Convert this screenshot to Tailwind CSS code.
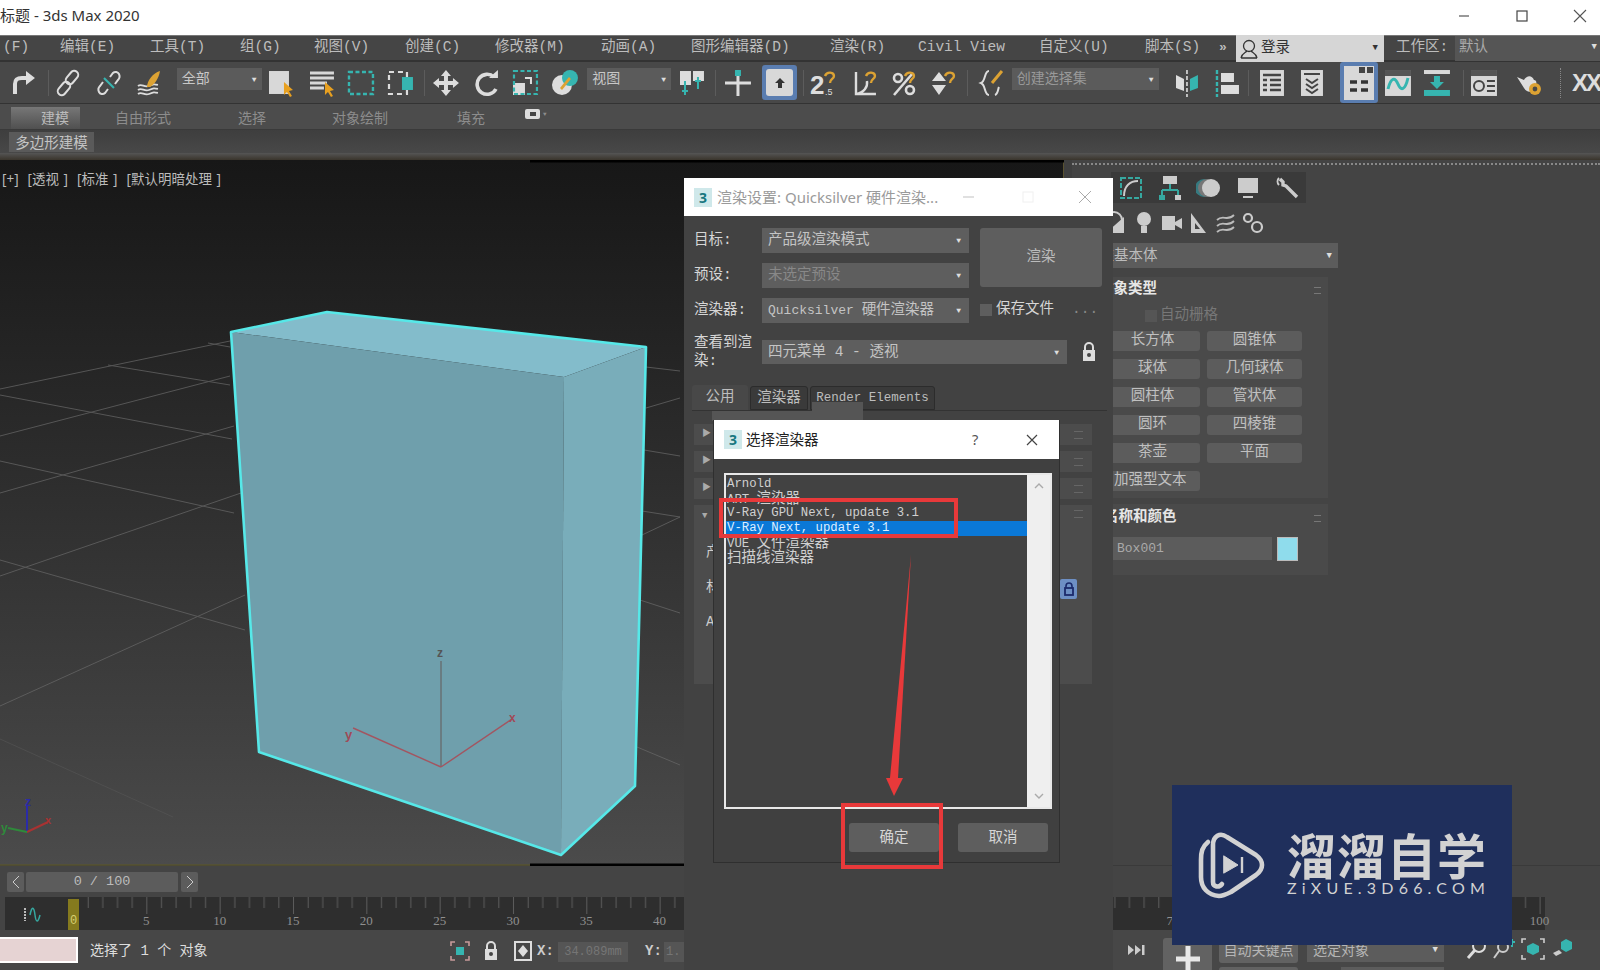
<!DOCTYPE html>
<html lang="zh-CN">
<head>
<meta charset="UTF-8" />
<title>3ds Max 2020</title>
<script src="https://cdn.jsdelivr.net/npm/@tailwindcss/browser@4"></script>
</head>
<body class="bg-[#444]">
<div class="relative w-[1600px] h-[970px] overflow-hidden flex flex-col bg-[#444] text-[#c8c8c8] [font-family:'Liberation_Mono','Noto_Sans_CJK_SC',monospace]">

  <!-- title bar -->
  <div class="h-[35px] shrink-0 bg-white flex items-center justify-between pb-[4px] text-[#333] text-[15px] [font-family:'Noto_Sans','Noto_Sans_CJK_SC',sans-serif]">
    <span>标题 - 3ds Max 2020</span>
    <div class="flex items-center gap-[30px] pr-[6px]">
      <svg class="w-[28px] h-[14px]" viewBox="0 0 28 14"><path d="M9 7h10" stroke="#555" stroke-width="1.2"/></svg>
      <svg class="w-[28px] h-[14px]" viewBox="0 0 28 14"><rect x="9" y="2" width="10" height="10" fill="none" stroke="#444" stroke-width="1.2"/></svg>
      <svg class="w-[28px] h-[14px]" viewBox="0 0 28 14"><path d="M8 1l12 12M20 1L8 13" stroke="#555" stroke-width="1.1"/></svg>
    </div>
  </div>

  <!-- menu bar -->
  <div class="h-[27px] shrink-0 flex items-center bg-[#454545] border-t border-[#777] border-b-2 border-b-[#333] text-[14.5px] text-[#bdbdbd] pl-[3px]">
    <span class="w-[57px]">(F)</span>
    <span class="w-[90px]">编辑(E)</span>
    <span class="w-[90px]">工具(T)</span>
    <span class="w-[74px]">组(G)</span>
    <span class="w-[91px]">视图(V)</span>
    <span class="w-[90px]">创建(C)</span>
    <span class="w-[106px]">修改器(M)</span>
    <span class="w-[90px]">动画(A)</span>
    <span class="w-[139px]">图形编辑器(D)</span>
    <span class="w-[88px]">渲染(R)</span>
    <span class="w-[121px]">Civil View</span>
    <span class="w-[106px]">自定义(U)</span>
    <span class="w-[74px]">脚本(S)</span>
    <span class="w-[17px] text-[13px] font-bold">»</span>
    <div class="w-[148px] h-[27px] bg-[#d6d6d6] text-[#333] flex items-center justify-between pr-[6px] pt-[2px]">
      <span class="flex items-center gap-[2px]">
        <svg class="ml-[3px] w-[20px] h-[22px]" viewBox="0 0 20 22" fill="none" stroke="#333" stroke-width="1.3"><circle cx="10" cy="8" r="5.5"/><path d="M2 20c1-5 4-5 6-7M18 20c-1-5-4-5-6-7M2 20h16"/></svg>
        登录
      </span>
      <span class="text-[9px]">▼</span>
    </div>
    <span class="ml-[12px] w-[59px]">工作区:</span>
    <div class="w-[145px] h-[25px] bg-[#555] text-[#aaa] flex items-center justify-between pl-[4px] pr-[3px]">
      <span>默认</span><span class="text-[9px] text-[#ddd]">▼</span>
    </div>
  </div>

  <!-- main toolbar -->
  <div class="h-[42px] shrink-0 flex items-center bg-[#484848] border-b border-[#333] text-[14px]">
    <svg class="ml-[8px] w-[28px] h-[28px]" viewBox="0 0 28 28"><path d="M7 25V15c0-5 3-6 7-6h5" fill="none" stroke="#ddd" stroke-width="4"/><path d="M18 2l9 7-9 7z" fill="#ddd"/></svg>
    <div class="ml-[12px] w-px h-[26px] bg-[#5c5c5c]"></div>
    <svg class="ml-[5px] w-[28px] h-[28px]" viewBox="0 0 28 28" fill="none" stroke="#ddd" stroke-width="2"><rect x="14" y="1" width="8" height="15" rx="4" transform="rotate(40 18 8.500)"/><rect x="6" y="12" width="8" height="15" rx="4" transform="rotate(40 10 19.500)"/></svg>
    <svg class="ml-[13px] w-[28px] h-[28px]" viewBox="0 0 28 28" fill="none" stroke="#ddd" stroke-width="2"><path d="M15 8l3-4c2-2 5-1 6 1s1 4-1 6l-3 4M13 20l-3 4c-2 2-5 1-6-1s-1-4 1-6l3-4"/><path d="M9 9l10 10" stroke="#36b5b0"/></svg>
    <svg class="ml-[13px] w-[28px] h-[28px]" viewBox="0 0 28 28" fill="none"><path d="M2 17c4-3 6 2 11 0s5-2 9-1M2 21c4-3 6 2 11 0s5-2 9-1M2 25c4-3 6 2 11 0s5-2 9-1" stroke="#ddd" stroke-width="1.8"/><path d="M11 18c0-6 6-14 13-16-1 7-5 13-10 16z" fill="#dca233"/></svg>
    <div class="ml-[13px] mb-[8px] w-[85px] h-[22px] bg-[#5b5b5b] flex items-center justify-between px-[5px] pt-[2px]"><span>全部</span><span class="text-[8px] text-[#ddd]">▼</span></div>
    <svg class="ml-[5px] w-[28px] h-[28px]" viewBox="0 0 28 28"><rect x="2" y="2" width="20" height="23" fill="#d8d8d8"/><path d="M17 13l9 8-4 1 3 5-2 1-3-5-3 3z" fill="#e8a020"/></svg>
    <svg class="ml-[13px] w-[28px] h-[28px]" viewBox="0 0 28 28"><path d="M2 4h24M2 9h24M2 14h17M2 19h14" stroke="#d8d8d8" stroke-width="3"/><path d="M17 13l9 8-4 1 3 5-2 1-3-5-3 3z" fill="#e8a020"/></svg>
    <svg class="ml-[11px] w-[28px] h-[28px]" viewBox="0 0 28 28"><rect x="2" y="3" width="24" height="22" fill="none" stroke="#36b5b0" stroke-width="2.4" stroke-dasharray="4 2.5"/></svg>
    <svg class="ml-[12px] w-[28px] h-[28px]" viewBox="0 0 28 28"><rect x="2" y="3" width="18" height="22" fill="none" stroke="#ddd" stroke-width="2.2" stroke-dasharray="5 4"/><rect x="15" y="8" width="11" height="13" fill="#36b5b0"/></svg>
    <div class="ml-[10px] w-px h-[26px] bg-[#5c5c5c]"></div>
    <svg class="ml-[7px] w-[28px] h-[28px]" viewBox="0 0 28 28" fill="#ddd"><path d="M14 1l5 6h-3v5h5V9l6 5-6 5v-3h-5v5h3l-5 6-5-6h3v-5H7v3l-6-5 6-5v3h5V7H9z"/></svg>
    <svg class="ml-[13px] w-[28px] h-[28px]" viewBox="0 0 28 28" fill="none"><path d="M21 8a10 10 0 1 0 2 12" stroke="#ddd" stroke-width="3.6"/><path d="M16 9h9V1z" fill="#ddd"/></svg>
    <svg class="ml-[10px] w-[28px] h-[28px]" viewBox="0 0 28 28"><rect x="2" y="14" width="12" height="12" fill="#ddd"/><rect x="3" y="2" width="23" height="23" fill="none" stroke="#36b5b0" stroke-width="2.2" stroke-dasharray="4 2.5"/><path d="M14 9h6v6" fill="none" stroke="#ddd" stroke-width="2"/></svg>
    <svg class="ml-[12px] w-[28px] h-[28px]" viewBox="0 0 28 28"><circle cx="11" cy="16" r="10" fill="#ddd"/><circle cx="19" cy="9" r="8" fill="#36b5b0"/><path d="M9 19l9-11 2 2-9 11z" fill="#dca233"/></svg>
    <div class="ml-[8px] mb-[8px] w-[84px] h-[22px] bg-[#5b5b5b] flex items-center justify-between px-[5px] pt-[2px]"><span>视图</span><span class="text-[8px] text-[#ddd]">▼</span></div>
    <svg class="ml-[7px] w-[28px] h-[28px]" viewBox="0 0 28 28"><rect x="2" y="2" width="11" height="14" fill="#ddd"/><rect x="15" y="2" width="11" height="10" fill="#ddd"/><path d="M7 12v14M4 22h6M20 8v12M17 12h6" stroke="#36b5b0" stroke-width="2"/></svg>
    <div class="ml-[9px] w-px h-[26px] bg-[#5c5c5c]"></div>
    <svg class="ml-[8px] w-[28px] h-[28px]" viewBox="0 0 28 28"><path d="M14 1v26M1 14h26" stroke="#ddd" stroke-width="3"/><rect x="11" y="1" width="6" height="6" fill="#36b5b0"/></svg>
    <div class="ml-[10px] w-[35px] h-[35px] rounded-[3px] bg-[#5a7db0] flex items-center justify-center">
      <div class="w-[27px] h-[27px] rounded-[3px] bg-[#d8d8d8] flex items-center justify-center">
        <svg class="w-[12px] h-[12px]" viewBox="0 0 12 12"><path d="M6 1l5 5H8v5H4V6H1z" fill="#333"/></svg>
      </div>
    </div>
    <div class="ml-[6px] w-px h-[26px] bg-[#5c5c5c]"></div>
    <svg class="ml-[6px] w-[28px] h-[30px]" viewBox="0 0 28 30"><text x="0" y="26" font-size="26" font-weight="700" fill="#ddd" font-family="Liberation Sans">2</text><text x="15" y="27" font-size="9" fill="#ddd" font-family="Liberation Sans">.5</text><path d="M15 8c2-5 9-4 9 0 0 3-4 3-4 7" fill="none" stroke="#dca233" stroke-width="2.4"/></svg>
    <svg class="ml-[14px] w-[28px] h-[28px]" viewBox="0 0 28 28"><path d="M4 3v22h20M4 25c8-1 12-7 11-13" fill="none" stroke="#ddd" stroke-width="2.4"/><path d="M14 7c2-5 9-4 9 0 0 3-4 3-4 7" fill="none" stroke="#dca233" stroke-width="2.4"/></svg>
    <svg class="ml-[10px] w-[28px] h-[28px]" viewBox="0 0 28 28" fill="none"><circle cx="8" cy="9" r="4" stroke="#ddd" stroke-width="2.6"/><circle cx="20" cy="21" r="4" stroke="#ddd" stroke-width="2.6"/><path d="M4 26L23 4" stroke="#ddd" stroke-width="2.6"/><path d="M15 7c2-5 9-4 9 0 0 3-4 3-4 7" stroke="#dca233" stroke-width="2.4"/></svg>
    <svg class="ml-[12px] w-[28px] h-[28px]" viewBox="0 0 28 28"><path d="M9 3l7 9H2zM9 26l7-10H2z" fill="#ddd"/><path d="M15 7c2-5 9-4 9 0 0 3-4 3-4 7" fill="none" stroke="#dca233" stroke-width="2.4"/></svg>
    <div class="ml-[9px] w-px h-[26px] bg-[#5c5c5c]"></div>
    <svg class="ml-[10px] w-[28px] h-[28px]" viewBox="0 0 28 28" fill="none"><path d="M11 2C6 2 8 12 3 14c5 2 3 12 8 12" stroke="#ddd" stroke-width="2"/><path d="M14 14L24 2" stroke="#dca233" stroke-width="3"/><path d="M17 26c3-1 3-6 4-8" stroke="#ddd" stroke-width="2"/></svg>
    <div class="ml-[6px] mb-[8px] w-[147px] h-[22px] bg-[#5b5b5b] flex items-center justify-between px-[5px] pt-[2px] text-[#999]"><span>创建选择集</span><span class="text-[8px] text-[#ddd]">▼</span></div>
    <svg class="ml-[14px] w-[28px] h-[28px]" viewBox="0 0 28 28"><path d="M3 6l8 4v12l-8-3z" fill="#ddd"/><path d="M25 6l-8 4v12l8-3z" fill="#36b5b0"/><path d="M14 1v27" stroke="#ddd" stroke-width="1.6" stroke-dasharray="4 2"/></svg>
    <svg class="ml-[13px] w-[28px] h-[28px]" viewBox="0 0 28 28"><path d="M4 1v27" stroke="#36b5b0" stroke-width="2.4" stroke-dasharray="4 2"/><rect x="8" y="4" width="13" height="9" fill="#ddd"/><rect x="8" y="16" width="18" height="9" fill="#ddd"/></svg>
    <div class="ml-[7px] w-px h-[26px] bg-[#5c5c5c]"></div>
    <svg class="ml-[9px] w-[28px] h-[28px]" viewBox="0 0 28 28"><rect x="2" y="1" width="24" height="26" fill="#d8d8d8"/><path d="M5 6h18M5 11h4M12 11h11M5 16h4M12 16h11M5 21h4M12 21h11" stroke="#444" stroke-width="2.4"/></svg>
    <svg class="ml-[12px] w-[28px] h-[28px]" viewBox="0 0 28 28"><rect x="3" y="1" width="22" height="26" fill="#d8d8d8"/><path d="M6 5h16M8 10l6 4 6-4M8 15l6 4 6-4M8 20l6 4 6-4" stroke="#444" stroke-width="2" fill="none"/></svg>
    <div class="ml-[14px] w-[38px] h-[41px] rounded-[3px] bg-[#5a7db0] flex items-center justify-center">
      <svg class="w-[30px] h-[34px]" viewBox="0 0 30 34"><rect width="30" height="34" fill="#d8d8d8"/><path d="M15 1h6v6h-6zM23 1h6v6h-6z" fill="#444"/><path d="M6 16h7M17 16h7M6 24h7M17 24h7" stroke="#333" stroke-width="3.5"/></svg>
    </div>
    <svg class="ml-[6px] w-[28px] h-[28px]" viewBox="0 0 28 28"><rect x="1" y="1" width="26" height="26" fill="#d8d8d8"/><rect x="1" y="1" width="26" height="6" fill="#555"/><path d="M4 20c3-12 7-12 10-5s7 7 10-6" fill="none" stroke="#36b5b0" stroke-width="3"/></svg>
    <svg class="ml-[11px] w-[28px] h-[28px]" viewBox="0 0 28 28"><rect x="1" y="1" width="26" height="4" fill="#d8d8d8"/><rect x="1" y="21" width="26" height="6" fill="#36b5b0"/><path d="M11 7h6v6h4l-7 7-7-7h4z" fill="#36b5b0"/></svg>
    <div class="ml-[12px] w-px h-[26px] bg-[#5c5c5c]"></div>
    <svg class="ml-[6px] w-[28px] h-[28px]" viewBox="0 0 28 28"><rect x="1" y="1" width="26" height="26" fill="#d8d8d8"/><rect x="1" y="1" width="26" height="6" fill="#555"/><circle cx="9" cy="17" r="5" fill="none" stroke="#444" stroke-width="2"/><path d="M17 12h8M17 17h8M17 22h8" stroke="#444" stroke-width="2"/></svg>
    <svg class="ml-[18px] w-[28px] h-[28px]" viewBox="0 0 28 28"><path d="M1 8l7 3c3-5 8-5 10 0 3 0 3 3 1 8-3 5-8 5-11 0z" fill="#ddd"/><circle cx="19" cy="20" r="6" fill="#dca233"/><circle cx="19" cy="20" r="2.4" fill="#484848"/></svg>
    <div class="ml-[16px] h-[30px] border-l border-dotted border-[#888]"></div>
    <span class="ml-[11px] text-[#ddd] text-[24px] font-bold tracking-[-2px] [font-family:'Liberation_Sans',sans-serif]">XX</span>
  </div>

  <!-- ribbon -->
  <div class="h-[26px] shrink-0 flex items-end bg-[#4c4c4c] border-b border-[#3a3a3a] text-[14px] leading-[24px] text-[#8c8c8c]">
    <div class="ml-[11px] w-[69px] h-[22px] bg-gradient-to-b from-[#777] to-[#505050] text-[#bbb] pl-[30px]">建模</div>
    <span class="ml-[35px] w-[60px] h-[22px]">自由形式</span>
    <span class="ml-[63px] w-[32px] h-[22px]">选择</span>
    <span class="ml-[62px] w-[60px] h-[22px]">对象绘制</span>
    <span class="ml-[65px] w-[30px] h-[22px]">填充</span>
    <div class="ml-[38px] h-[22px] flex items-start gap-[3px] pt-[2px]">
      <div class="w-[15px] h-[10px] rounded-[2px] bg-[#ddd] flex items-center justify-center"><div class="w-[6px] h-[4px] bg-[#444]"></div></div>
      <span class="text-[6px] leading-[12px]">▼</span>
    </div>
  </div>
  <div class="h-[23px] shrink-0 flex items-center bg-gradient-to-b from-[#3e3e3e] to-[#484848]">
    <div class="ml-[9px] w-[85px] h-[20px] bg-[#5a5a5a] text-[14.500px] leading-[19px] text-center text-[#c4c4c4] [font-family:'Noto_Sans_CJK_SC',sans-serif]">多边形建模</div>
  </div>
  <div class="h-[7px] shrink-0 bg-gradient-to-b from-[#555] to-[#3a352c]"></div>

  <!-- viewport and command panel -->
  <div class="h-[706px] shrink-0 flex border-b border-[#3a3a3a]">
    <div class="relative w-[1064px] shrink-0 bg-gradient-to-b from-[#171717] to-[#4b4b4b] border-r border-[#5a5230]">
      <svg class="absolute inset-0 w-[1064px] h-[706px]" viewBox="0 160 1064 706">
        <path d="M530 161H1064" stroke="#000" stroke-width="3"/>
        <path d="M530 865H684" stroke="#000" stroke-width="3"/>
        <path d="M0 865H530" stroke="#57532f" stroke-width="1.5"/>
        <g stroke="#6a6a6a" stroke-width="1" fill="none" opacity=".7">
          <path d="M0 389L230 341M0 436L230 376M0 493L234 426M0 576L241 493M0 706L245 595"/>
          <path d="M208 343L230 347M108 365L230 385M0 395L232 439M0 461L234 513M0 560L245 630"/>
          <path d="M646 367L680 371M646 408L680 398M644 450L680 456M642 511L680 517M642 535L680 517M640 600L680 613M637 747L680 765"/>
        </g>
        <path d="M0 739L173 817" stroke="#5a5a5a" stroke-width="1" opacity=".5"/>
        <path d="M231 332L327 312L646 347L564 377Z" fill="#83bccb"/>
        <path d="M231 332L564 377L561 855L259 752Z" fill="#6f9fac"/>
        <path d="M564 377L646 347L635 786L561 855Z" fill="#79adba"/>
        <path d="M231 332L327 312L646 347L635 786L561 855L259 752Z" fill="none" stroke="#56e8e8" stroke-width="2.6" stroke-linejoin="round"/>
        <path d="M441 767V661" stroke="#666" stroke-width="1.2"/>
        <path d="M441 767L349 739" stroke="#a35560" stroke-width="1.4" transform="rotate(7 441 767)"/>
        <path d="M441 767L512 719" stroke="#a35560" stroke-width="1.4"/>
        <text x="437" y="657" font-size="12" font-weight="700" fill="#555" font-family="Liberation Sans">z</text>
        <text x="345" y="739" font-size="13" font-weight="700" fill="#a04a58" font-family="Liberation Sans">y</text>
        <text x="509" y="722" font-size="12" font-weight="700" fill="#a04a58" font-family="Liberation Sans">x</text>
        <path d="M27 832V806" stroke="#2b2ba8" stroke-width="2"/>
        <path d="M27 832L48 822" stroke="#a83232" stroke-width="2"/>
        <path d="M27 832L8 828" stroke="#2f8a3b" stroke-width="2"/>
        <text x="25" y="806" font-size="12" font-weight="700" fill="#2b2ba8" font-family="Liberation Sans">z</text>
        <text x="45" y="824" font-size="11" font-weight="700" fill="#a83232" font-family="Liberation Sans">x</text>
        <text x="1" y="832" font-size="12" font-weight="700" fill="#2f8a3b" font-family="Liberation Sans">y</text>
      </svg>
      <div class="relative pl-[2px] pt-[9px] text-[13.5px] text-[#bbb] whitespace-pre [word-spacing:1px] [font-family:'Noto_Sans','Noto_Sans_CJK_SC',sans-serif]">[+]  [透视 ]  [标准 ]  [默认明暗处理 ]</div>
    </div>

    <div class="w-[8px] shrink-0 bg-[#3f3f3f]"></div>

    <!-- command panel -->
    <div class="flex-1 flex flex-col">
      <div class="mt-[3px] h-[2px] border-t-2 border-dotted border-[#888]"></div>
      <div class="mt-[7px] h-[31px] flex ml-[39px]">
        <div class="w-[39px] bg-[#3a3a3a] flex items-center justify-center"><svg class="w-[26px] h-[26px]" viewBox="0 0 26 26" fill="none" stroke="#36a8a0" stroke-width="2"><rect x="3" y="3" width="20" height="20" stroke-dasharray="5 2"/><path d="M6 21c0-10 6-15 14-15" stroke="#ccc"/></svg></div>
        <div class="w-[39px] bg-[#3a3a3a] flex items-center justify-center"><svg class="w-[26px] h-[26px]" viewBox="0 0 26 26"><rect x="6" y="1" width="14" height="8" fill="#ccc"/><path d="M13 9v6M5 15h16M5 15v5M21 15v5" stroke="#36a8a0" stroke-width="2" fill="none"/><rect x="2" y="20" width="6" height="5" fill="#36a8a0"/><rect x="18" y="20" width="6" height="5" fill="#ccc"/></svg></div>
        <div class="w-[39px] bg-[#3a3a3a] flex items-center justify-center"><svg class="w-[26px] h-[26px]" viewBox="0 0 26 26"><circle cx="8" cy="13" r="9" fill="#367a80"/><circle cx="11" cy="13" r="9" fill="#777"/><circle cx="15" cy="13" r="9" fill="#ccc"/></svg></div>
        <div class="w-[39px] bg-[#3a3a3a] flex items-center justify-center"><svg class="w-[26px] h-[26px]" viewBox="0 0 26 26"><rect x="3" y="3" width="20" height="15" fill="#ccc"/><path d="M8 22h10" stroke="#ccc" stroke-width="2"/></svg></div>
        <div class="w-[39px] bg-[#3a3a3a] flex items-center justify-center"><svg class="w-[26px] h-[26px]" viewBox="0 0 26 26" fill="none"><path d="M6 4l3 3v3l3 1 11 11" stroke="#ccc" stroke-width="3.4"/><path d="M5 3a5 5 0 0 0 0 7" stroke="#ccc" stroke-width="2"/></svg></div>
      </div>
      <div class="mt-[6px] h-[28px] flex items-center ml-[32px]">
        <svg class="w-[27px] h-[24px]" viewBox="0 0 27 24"><circle cx="10" cy="9" r="8" fill="none" stroke="#ccc" stroke-width="2"/><path d="M2 22L20 6v16z" fill="#ccc"/></svg>
        <svg class="w-[27px] h-[24px]" viewBox="0 0 27 24"><circle cx="13" cy="8" r="7" fill="#ccc"/><rect x="10" y="15" width="6" height="7" fill="#ccc"/></svg>
        <svg class="w-[27px] h-[24px]" viewBox="0 0 27 24"><rect x="4" y="5" width="13" height="14" fill="#ccc"/><path d="M17 11l7-4v11l-7-4z" fill="#ccc"/></svg>
        <svg class="w-[27px] h-[24px]" viewBox="0 0 27 24"><path d="M6 2l15 20H6zM10 12v6h5z" fill="#ccc" fill-rule="evenodd"/></svg>
        <svg class="w-[27px] h-[24px]" viewBox="0 0 27 24" fill="none" stroke="#bbb" stroke-width="1.8"><path d="M5 9c6-6 10 2 17-5M5 15c6-6 10 2 17-5M5 21c6-6 10 2 17-5"/></svg>
        <svg class="w-[27px] h-[24px]" viewBox="0 0 27 24" fill="none" stroke="#ccc" stroke-width="2.2"><circle cx="9" cy="7" r="4"/><circle cx="18" cy="16" r="5"/></svg>
      </div>
      <div class="mt-[6px] ml-[13px] w-[253px] h-[25px] bg-[#5c5c5c] flex items-center justify-between pt-[2px] pr-[6px] text-[14.5px] text-[#bbb]"><span>标准基本体</span><span class="text-[9px] text-[#ddd]">▼</span></div>

      <div class="mt-[9px] ml-[13px] w-[243px] h-[221px] bg-[#4a4a4a] flex flex-col">
        <div class="h-[22px] flex items-center justify-between pl-[14px] pr-[7px] pt-[4px]"><span class="text-[14.5px] font-bold text-[#e6e6e6]">对象类型</span><span class="w-[7px] h-[7px] border-y border-[#777]"></span></div>
        <div class="mt-[6px] ml-[60px] flex items-center gap-[3px] text-[14.5px] text-[#777]"><span class="w-[12px] h-[12px] bg-[#555]"></span>自动栅格</div>
        <div class="mt-[4px] ml-[20px] grid grid-cols-[95px_95px] gap-x-[7px] gap-y-[7.5px] text-[14.5px] text-[#c0c0c0]">
          <div class="h-[20.5px] bg-[#5c5c5c] rounded-[3px] flex items-center justify-center">长方体</div>
          <div class="h-[20.5px] bg-[#5c5c5c] rounded-[3px] flex items-center justify-center">圆锥体</div>
          <div class="h-[20.5px] bg-[#5c5c5c] rounded-[3px] flex items-center justify-center">球体</div>
          <div class="h-[20.5px] bg-[#5c5c5c] rounded-[3px] flex items-center justify-center">几何球体</div>
          <div class="h-[20.5px] bg-[#5c5c5c] rounded-[3px] flex items-center justify-center">圆柱体</div>
          <div class="h-[20.5px] bg-[#5c5c5c] rounded-[3px] flex items-center justify-center">管状体</div>
          <div class="h-[20.5px] bg-[#5c5c5c] rounded-[3px] flex items-center justify-center">圆环</div>
          <div class="h-[20.5px] bg-[#5c5c5c] rounded-[3px] flex items-center justify-center">四棱锥</div>
          <div class="h-[20.5px] bg-[#5c5c5c] rounded-[3px] flex items-center justify-center">茶壶</div>
          <div class="h-[20.5px] bg-[#5c5c5c] rounded-[3px] flex items-center justify-center">平面</div>
          <div class="h-[20.5px] bg-[#5c5c5c] rounded-[3px] flex items-center pl-[9px] whitespace-nowrap">加强型文本</div>
        </div>
      </div>

      <div class="mt-[6px] ml-[13px] w-[243px] h-[71px] bg-[#4a4a4a] flex flex-col">
        <div class="h-[24px] flex items-center justify-between pl-[19px] pr-[7px] pt-[4px]"><span class="text-[14.5px] font-bold text-[#e6e6e6]">名称和颜色</span><span class="w-[7px] h-[7px] border-y border-[#777]"></span></div>
        <div class="mt-[9px] flex items-start">
          <div class="w-[187px] h-[23px] bg-[#5c5c5c] flex items-center pl-[32px] text-[13px] text-[#aaa]">Box001</div>
          <div class="ml-[5px] w-[21px] h-[24px] bg-[#8fdcec] border border-[#bbb]"></div>
        </div>
      </div>
    </div>
  </div>

  <!-- time slider -->
  <div class="h-[31px] shrink-0 flex items-center pl-[7px] bg-[#444] text-[13.5px] text-[#bbb]">
    <div class="w-[17px] h-[20px] bg-[#5c5c5c] rounded-[2px] flex items-center justify-center"><svg class="w-[8px] h-[14px]" viewBox="0 0 8 14"><path d="M7 1L1 7l6 6" fill="none" stroke="#ccc"/></svg></div>
    <div class="ml-[2px] w-[152px] h-[20px] bg-[#5c5c5c] rounded-[2px] flex items-center justify-center pt-[1px]">0 / 100</div>
    <div class="ml-[3px] w-[17px] h-[20px] bg-[#5c5c5c] rounded-[2px] flex items-center justify-center"><svg class="w-[8px] h-[14px]" viewBox="0 0 8 14"><path d="M1 1l6 6-6 6" fill="none" stroke="#ccc"/></svg></div>
  </div>

  <!-- track bar -->
  <div class="relative h-[33px] shrink-0 ml-[5px] w-[1540px] bg-[#2e2e2e]">
    <svg class="absolute inset-0 w-[1540px] h-[33px]" viewBox="0 0 1540 33">
      <defs>
        <pattern id="ticks" x="68" y="0" width="73.33" height="33" patternUnits="userSpaceOnUse">
          <path d="M.5 0v17M15.2 0v11M29.8 0v11M44.5 0v11M59.2 0v11" stroke="#5c5c5c" stroke-width="1"/>
        </pattern>
      </defs>
      <rect x="74" width="1466" height="33" fill="url(#ticks)"/>
    </svg>
    <svg class="absolute left-[17px] top-[9px] w-[22px] h-[18px]" viewBox="0 0 22 18"><path d="M3 2v13" stroke="#bbb" stroke-width="2" stroke-dasharray="2 1"/><path d="M8 9c2-10 4-8 5 0s3 8 5 0" fill="none" stroke="#36a8a0" stroke-width="1.5"/></svg>
    <div class="absolute left-[63px] top-[2px] w-[11px] h-[31px] bg-[#857a1e] flex items-end justify-center text-[12px] text-[#d6ce70]">0</div>
    <div class="relative w-[1600px] pl-[104.67px] pt-[14px] flex text-[13px] text-[#8f8f8f] [font-family:'Liberation_Serif',serif]">
      <span class="w-[73.33px] text-center">5</span><span class="w-[73.33px] text-center">10</span><span class="w-[73.33px] text-center">15</span><span class="w-[73.33px] text-center">20</span><span class="w-[73.33px] text-center">25</span><span class="w-[73.33px] text-center">30</span><span class="w-[73.33px] text-center">35</span><span class="w-[73.33px] text-center">40</span><span class="w-[73.33px] text-center">45</span><span class="w-[73.33px] text-center">50</span><span class="w-[73.33px] text-center">55</span><span class="w-[73.33px] text-center">60</span><span class="w-[73.33px] text-center">65</span><span class="w-[73.33px] text-center">70</span><span class="w-[73.33px] text-center">75</span><span class="w-[293.32px]"></span><span class="w-[73.33px] text-center">100</span>
    </div>
  </div>

  <!-- status bar -->
  <div class="flex-1 flex items-start bg-[#474747] text-[14px]">
    <div class="mt-[7px] w-[78px] h-[26px] bg-[#e6d3d3] border-y-2 border-r-2 border-white"></div>
    <span class="ml-[12px] mt-[11px] w-[345px] text-[#ddd]">选择了 1 个 对象</span>
    <svg class="ml-[15px] mt-[11px] w-[20px] h-[20px]" viewBox="0 0 20 20"><rect x="6" y="6" width="8" height="8" fill="#36b5b0"/><path d="M1 5V1h4M15 1h4v4M1 15v4h4M15 19h4v-4" fill="none" stroke="#c89a9a" stroke-width="1.6"/></svg>
    <svg class="ml-[14px] mt-[10px] w-[14px] h-[22px]" viewBox="0 0 14 22"><path d="M3 9V6a4 4 0 0 1 8 0v3" fill="none" stroke="#ddd" stroke-width="2"/><rect x="1" y="9" width="12" height="11" fill="#ddd"/><circle cx="7" cy="14" r="2" fill="#444"/></svg>
    <svg class="ml-[15px] mt-[10px] w-[20px] h-[22px]" viewBox="0 0 20 22"><rect x="2" y="2" width="16" height="18" fill="none" stroke="#ddd" stroke-width="2"/><path d="M10 5l5 6-5 6-5-6z" fill="#ddd"/></svg>
    <span class="ml-[4px] mt-[11px] w-[21px] font-bold text-[#ccc]">X:</span>
    <div class="mt-[12px] w-[70px] h-[20px] bg-[#555] text-[12px] text-[#757575] flex items-center justify-center">34.089mm</div>
    <span class="ml-[17px] mt-[11px] w-[19px] font-bold text-[#ccc]">Y:</span>
    <div class="mt-[12px] w-[60px] h-[20px] bg-[#555] text-[12px] text-[#757575] flex items-center pl-[2px]">1.</div>
    <svg class="ml-[403px] mt-[13px] w-[20px] h-[14px]" viewBox="0 0 20 14" fill="#ccc"><path d="M1 2l6 5-6 5zM8 2l6 5-6 5z"/><rect x="15" y="2" width="2.5" height="10"/></svg>
    <div class="ml-[16px] mt-[8px] w-[49px] h-[40px] bg-[#626262] rounded-t-[3px] flex items-start justify-center pt-[6px]">
      <svg class="w-[28px] h-[28px]" viewBox="0 0 28 28"><path d="M14 2v26M2 15h24" stroke="#e8e8e8" stroke-width="5"/></svg>
    </div>
    <div class="ml-[7px] mt-[10px] w-[79px] flex flex-col gap-[4px]">
      <div class="h-[23px] bg-[#626262] rounded-[3px] flex items-center justify-center text-[#b5b5b5]">自动关键点</div>
      <div class="h-[10px] bg-[#626262] rounded-t-[3px]"></div>
    </div>
    <div class="ml-[9px] mt-[10px] w-[137px] flex flex-col gap-[5px]">
      <div class="h-[22px] bg-[#5c5c5c] flex items-center justify-between px-[6px] text-[#b5b5b5]"><span>选定对象</span><span class="text-[9px] text-[#ddd]">▼</span></div>
      <div class="h-[10px] ml-[34px] bg-[#5c5c5c]"></div>
    </div>
    <svg class="ml-[22px] mt-[8px] w-[22px] h-[22px]" viewBox="0 0 22 22" fill="none" stroke="#ddd" stroke-width="2"><circle cx="13" cy="8" r="6"/><path d="M9 12l-7 8" stroke-width="3"/></svg>
    <svg class="ml-[5px] mt-[8px] w-[24px] h-[22px]" viewBox="0 0 24 22" fill="none" stroke="#ccc" stroke-width="2"><circle cx="10" cy="9" r="5"/><path d="M6 13l-5 7"/><path d="M16 4h6M19 1v8" stroke="#36b5b0"/></svg>
    <svg class="ml-[3px] mt-[7px] w-[26px] h-[24px]" viewBox="0 0 26 24"><path d="M13 6l6 3v6l-6 3-6-3V9z" fill="#36b5b0"/><path d="M2 6V2h4M20 2h4v4M2 18v4h4M20 22h4v-4" fill="none" stroke="#ccc" stroke-width="1.6"/></svg>
    <svg class="ml-[5px] mt-[7px] w-[26px] h-[24px]" viewBox="0 0 26 24"><path d="M15 2l6 3v7l-6 3-5-3V5z" fill="#36b5b0"/><path d="M2 16l6-3 3 3-6 3z" fill="#ccc"/></svg>
  </div>

  <!-- render setup dialog -->
  <div class="absolute left-[684px] top-[178px] w-[429px] h-[792px] bg-[#424242] flex flex-col">
    <div class="h-[38px] shrink-0 bg-white flex items-center text-[15px] text-[#9a9a9a] [font-family:'Noto_Sans','Noto_Sans_CJK_SC',sans-serif]">
      <div class="ml-[10px] w-[18px] h-[19px] bg-[#cfe8ea] flex items-center justify-center text-[14px] font-bold text-[#17777f]">3</div>
      <span class="ml-[5px] w-[240px] whitespace-nowrap">渲染设置: Quicksilver 硬件渲染...</span>
      <svg class="ml-[5px] w-[14px] h-[14px]" viewBox="0 0 14 14"><path d="M1 7h11" stroke="#ccc" stroke-width="1.2"/></svg>
      <svg class="ml-[45px] w-[14px] h-[14px]" viewBox="0 0 14 14"><rect x="2" y="2" width="10" height="10" fill="none" stroke="#f0f0f0" stroke-width="1"/></svg>
      <svg class="ml-[43px] w-[14px] h-[14px]" viewBox="0 0 14 14"><path d="M1 1l12 12M13 1L1 13" stroke="#aaa" stroke-width="1"/></svg>
    </div>

    <div class="mt-[12px] ml-[10px] grid grid-cols-[68px_207px] gap-y-[10px] items-center relative text-[14.5px] text-[#d6d6d6]">
      <span class="pt-[1px]">目标:</span>
      <div class="h-[25px] bg-[#5e5e5e] flex items-center justify-between pl-[6px] pr-[8px] pt-[1px] text-[#c4c4c4]"><span>产品级渲染模式</span><span class="text-[8px] text-[#ddd]">▼</span></div>
      <span class="pt-[1px]">预设:</span>
      <div class="h-[25px] bg-[#5e5e5e] flex items-center justify-between pl-[6px] pr-[8px] pt-[1px] text-[#888]"><span>未选定预设</span><span class="text-[8px] text-[#ddd]">▼</span></div>
      <span class="pt-[1px]">渲染器:</span>
      <div class="h-[25px] bg-[#5e5e5e] flex items-center justify-between pl-[6px] pr-[8px] pt-[1px] text-[#c4c4c4] text-[13px]"><span>Quicksilver <span class="text-[14.5px]">硬件渲染器</span></span><span class="text-[8px] text-[#ddd]">▼</span></div>
      <div class="absolute left-[286px] top-0 w-[122px] h-[59px] bg-[#5e5e5e] rounded-[3px] flex items-center justify-center pt-[1px] text-[#bbb]">渲染</div>
      <div class="absolute left-[286px] top-[69px] h-[25px] w-[143px] flex items-center">
        <span class="w-[12px] h-[12px] bg-[#5e5e5e]"></span>
        <span class="ml-[4px] text-[#d6d6d6]">保存文件</span>
        <span class="ml-[18px] text-[#888]">...</span>
      </div>
    </div>

    <div class="mt-[17px] ml-[10px] flex items-center h-[24px] text-[14.5px] text-[#d6d6d6]">
      <span class="w-[68px] leading-[18px]">查看到渲染:</span>
      <div class="w-[305px] h-[24px] bg-[#5e5e5e] flex items-center justify-between pl-[6px] pr-[8px] pt-[1px] text-[#c4c4c4]"><span>四元菜单 4 - 透视</span><span class="text-[8px] text-[#ddd]">▼</span></div>
      <svg class="ml-[15px] w-[14px] h-[20px]" viewBox="0 0 14 20"><path d="M3 8V5a4 4 0 0 1 8 0v3" fill="none" stroke="#ddd" stroke-width="2"/><rect x="1" y="8" width="12" height="11" fill="#ddd"/><circle cx="7" cy="13" r="2" fill="#444"/></svg>
    </div>

    <div class="mt-[22px] ml-[8px] h-[25px] flex items-end gap-[2px] border-b border-[#333] mr-[6px] text-[14.5px]">
      <div class="w-[56px] h-[25px] bg-[#484848] rounded-t-[3px] flex items-center justify-center pt-[1px] text-[#bdbdbd]">公用</div>
      <div class="w-[58px] h-[24px] bg-[#3a3a3a] border border-[#2c2c2c] rounded-t-[3px] flex items-center justify-center pt-[1px] text-[#bdbdbd]">渲染器</div>
      <div class="w-[125px] h-[24px] bg-[#3a3a3a] border border-[#2c2c2c] rounded-t-[3px] flex items-center justify-center pt-[1px] text-[12.5px] text-[#bdbdbd]">Render Elements</div>
    </div>

    <div class="mt-[13px] ml-[10px] mr-[21px] flex flex-col gap-[6px] text-[#aaa]">
      <div class="h-[21px] bg-[#4c4c4c] flex items-center justify-between pl-[8px] pr-[9px] text-[9px]"><span>▶</span><span class="w-[9px] h-[8px] border-y border-[#666]"></span></div>
      <div class="h-[21px] bg-[#4c4c4c] flex items-center justify-between pl-[8px] pr-[9px] text-[9px]"><span>▶</span><span class="w-[9px] h-[8px] border-y border-[#666]"></span></div>
      <div class="h-[21px] bg-[#4c4c4c] flex items-center justify-between pl-[8px] pr-[9px] text-[9px]"><span>▶</span><span class="w-[9px] h-[8px] border-y border-[#666]"></span></div>
      <div class="relative h-[179px] bg-[#4c4c4c] flex items-start justify-between pl-[8px] pr-[9px] pt-[5px] text-[9px]">
        <span>▼</span><span class="w-[9px] h-[8px] border-y border-[#666]"></span>
        <div class="absolute left-[12px] top-[37px] text-[14px] text-[#ccc] flex flex-col gap-[14px]"><span>产品</span><span>材质</span><span>Active</span></div>
        <div class="absolute left-[366px] top-[74px] w-[17px] h-[20px] bg-[#6d8fc4] rounded-[2px] flex items-center justify-center"><svg class="w-[10px] h-[14px]" viewBox="0 0 10 14"><path d="M2 6V4a3 3 0 0 1 6 0v2" fill="none" stroke="#1b2a6b" stroke-width="1.6"/><rect x="1" y="6" width="8" height="7" fill="none" stroke="#1b2a6b" stroke-width="1.8"/></svg></div>
      </div>
    </div>

    <!-- ghost left over from the dialog below -->
    <div class="absolute left-[28px] top-[233px] w-[151px] h-[10px] bg-[#555]"></div>
    <div class="absolute left-[128px] top-[224px] w-[51px] h-[9px] bg-[#555]"></div>
  </div>

  <!-- choose renderer dialog -->
  <div class="absolute left-[713px] top-[420px] w-[347px] h-[443px] bg-[#404040] border-b border-x border-[#2f2f2f] flex flex-col">
    <div class="h-[39px] shrink-0 bg-white flex items-center text-[14.5px] text-[#222] [font-family:'Noto_Sans','Noto_Sans_CJK_SC',sans-serif]">
      <div class="ml-[10px] w-[18px] h-[19px] bg-[#cfe8ea] flex items-center justify-center text-[14px] font-bold text-[#17777f]">3</div>
      <span class="ml-[4px] w-[226px]">选择渲染器</span>
      <span class="text-[#555]">?</span>
      <svg class="ml-[47px] w-[14px] h-[14px]" viewBox="0 0 14 14"><path d="M2 2l10 10M12 2L2 12" stroke="#444" stroke-width="1.2"/></svg>
    </div>
    <div class="mt-[14px] ml-[10px] w-[328px] h-[336px] border-2 border-[#e8e8e8] flex">
      <div class="flex-1 bg-[#424242] text-[12.3px] leading-[14.7px] text-[#d0d0d0] pt-[2px]">
        <div class="h-[14.7px] pl-[1px]">Arnold</div>
        <div class="h-[14.7px] pl-[1px]">ART <span class="text-[14.5px]">渲染器</span></div>
        <div class="h-[14.7px] pl-[1px]">V-Ray GPU Next, update 3.1</div>
        <div class="relative h-[14.7px] pl-[1px] bg-[#0a78d7] text-[#dceeff]">V-Ray Next, update 3.1</div>
        <div class="h-[14.7px] pl-[1px]">VUE <span class="text-[14.5px]">文件渲染器</span></div>
        <div class="h-[14.7px] pl-[1px] pt-[1px] text-[14.5px]">扫描线渲染器</div>
      </div>
      <div class="w-[23px] bg-[#efefef] flex flex-col items-center justify-between py-[8px]">
        <svg class="w-[10px] h-[6px]" viewBox="0 0 10 6"><path d="M1 5l4-4 4 4" fill="none" stroke="#aaa" stroke-width="1.4"/></svg>
        <svg class="w-[10px] h-[6px]" viewBox="0 0 10 6"><path d="M1 1l4 4 4-4" fill="none" stroke="#aaa" stroke-width="1.4"/></svg>
      </div>
    </div>
    <div class="mt-[14px] ml-[135px] flex gap-[19px] text-[14.5px] text-[#d6d6d6]">
      <div class="w-[90px] h-[29px] bg-[#5e5e5e] rounded-[3px] flex items-center justify-center pt-[3px]">确定</div>
      <div class="w-[90px] h-[29px] bg-[#5e5e5e] rounded-[3px] flex items-center justify-center pt-[3px]">取消</div>
    </div>
  </div>

  <!-- red annotations -->
  <svg class="absolute inset-0 w-[1600px] h-[970px] pointer-events-none" viewBox="0 0 1600 970">
    <rect x="721" y="500" width="235" height="36" fill="none" stroke="#e8393a" stroke-width="4"/>
    <rect x="843" y="805" width="98" height="62" fill="none" stroke="#e8393a" stroke-width="4"/>
    <path d="M911 555L898 778H890Z" fill="#e8393a"/>
    <path d="M886 778H903L894 796Z" fill="#e8393a"/>
  </svg>

  <!-- watermark -->
  <div class="absolute left-[1172px] top-[785px] w-[340px] h-[160px] bg-[#1f2f5c] flex items-center text-[#d2d2d2]">
    <svg class="ml-[24px] w-[70px] h-[70px]" viewBox="1195 830 70 70" fill="none" stroke="#d2d2d2" stroke-width="4.6" stroke-linecap="round" stroke-linejoin="round">
      <path d="M1207 842C1201 847 1200 852 1200 860V877C1200 888 1207 895 1218 896C1222 896 1226 894 1230 892L1255 875C1263 869 1263 861 1255 855L1226 837C1219 832 1212 836 1212 845V882C1212 887 1218 888 1221 884"/>
      <path d="M1223 856L1237 865L1223 873Z" fill="#d2d2d2" stroke-width="1"/>
      <path d="M1241 857V873" stroke-width="2.4" stroke-linecap="butt"/>
    </svg>
    <div class="ml-[21px] flex flex-col -mt-[4px]">
      <span class="text-[49px] leading-[50px] font-bold tracking-[1px] whitespace-nowrap [font-family:'Noto_Sans_CJK_SC',sans-serif]">溜溜自学</span>
      <span class="text-[16px] leading-[18px] tracking-[5.2px] whitespace-nowrap [font-family:'Lato',sans-serif]">ZiXUE.3D66.COM</span>
    </div>
  </div>
</div>
</body>
</html>
